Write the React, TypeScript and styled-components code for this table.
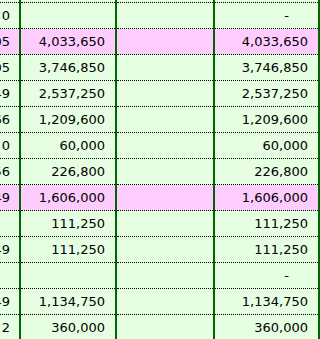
import React from "react";
import styled, { createGlobalStyle } from "styled-components";

const GlobalStyle = createGlobalStyle`
  html, body {
    margin: 0;
    padding: 0;
    overflow: hidden;
    background: #e6ffe3;
  }
`;

type SheetRow = { left: string; mid: string; right: string; pink?: boolean };

const rows: SheetRow[] = [
  { left: "0", mid: "", right: "-" },
  { left: "3,905", mid: "4,033,650", right: "4,033,650", pink: true },
  { left: "1,105", mid: "3,746,850", right: "3,746,850" },
  { left: "2,149", mid: "2,537,250", right: "2,537,250" },
  { left: "1,266", mid: "1,209,600", right: "1,209,600" },
  { left: "0", mid: "60,000", right: "60,000" },
  { left: "1,256", mid: "226,800", right: "226,800" },
  { left: "2,149", mid: "1,606,000", right: "1,606,000", pink: true },
  { left: "", mid: "111,250", right: "111,250" },
  { left: "2,149", mid: "111,250", right: "111,250" },
  { left: "", mid: "", right: "-" },
  { left: "2,149", mid: "1,134,750", right: "1,134,750" },
  { left: "2", mid: "360,000", right: "360,000" },
];

const Sheet = styled.table`
  border-collapse: collapse;
  table-layout: fixed;
  width: 319px;
  font-family: "DejaVu Sans", Verdana, sans-serif;
  font-size: 13px;
  color: #000;
`;

const Row = styled.tr<{ $pink?: boolean }>`
  background: ${(p) => (p.$pink ? "#ffccff" : "#e6ffe3")};
`;

const Cell = styled.td<{ $short?: boolean; $pad?: number }>`
  height: ${(p) => (p.$short ? "2px" : "25px")};
  padding: 0 ${(p) => p.$pad ?? 10}px 0 0;
  text-align: right;
  vertical-align: middle;
  white-space: nowrap;
  line-height: 15px;
  border-left: none;
  border-top: none;
  border-right: 2px solid #006400;
  border-bottom: 1px dotted #000;
  overflow: hidden;
`;

const Clip = styled.div`
  display: flex;
  justify-content: flex-end;
  white-space: nowrap;
`;

const Dash = styled.span`
  padding-right: 19px;
`;

const Value = ({ text }: { text: string }) =>
  text === "-" ? <Dash>-</Dash> : <>{text}</>;

export default function App() {
  return (
    <>
      <GlobalStyle />
      <Sheet>
        <colgroup>
          <col style={{ width: 20 }} />
          <col style={{ width: 96 }} />
          <col style={{ width: 98 }} />
          <col style={{ width: 105 }} />
        </colgroup>
        <tbody>
          <Row>
            <Cell $short />
            <Cell $short />
            <Cell $short />
            <Cell $short />
          </Row>
          {rows.map((r, i) => (
            <Row key={i} $pink={r.pink}>
              <Cell $pad={9}>
                <Clip>{r.left}</Clip>
              </Cell>
              <Cell>
                <Value text={r.mid} />
              </Cell>
              <Cell />
              <Cell>
                <Value text={r.right} />
              </Cell>
            </Row>
          ))}
        </tbody>
      </Sheet>
    </>
  );
}
